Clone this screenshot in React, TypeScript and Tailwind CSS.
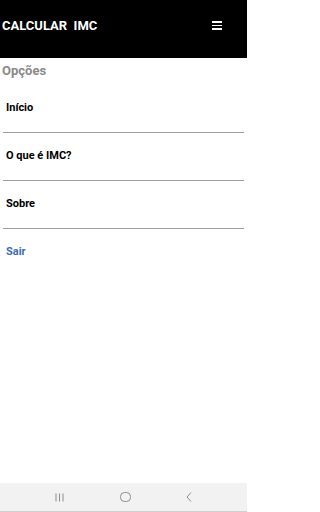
const FONT = { fontFamily: "Roboto, 'Liberation Sans', sans-serif" };

const items = ["Início", "O que é IMC?", "Sobre"];

export default function App() {
    return (
        <div className="w-[247px] h-[512px] bg-white flex flex-col" style={FONT}>
            <header className="h-[58px] bg-black flex items-start justify-between pt-[17px]">
                <h1 className="text-white font-bold text-[13px] leading-[18px] pl-[2px] whitespace-pre">
                    CALCULAR  IMC
                </h1>
                <div className="flex flex-col gap-[2px] mr-[25px] mt-[4px]">
                    <span className="block w-[10px] h-[1.5px] bg-white" />
                    <span className="block w-[10px] h-[1.5px] bg-white" />
                    <span className="block w-[10px] h-[1.5px] bg-white" />
                </div>
            </header>

            <main className="flex-1 flex flex-col">
                <p className="text-[#8a8a8a] font-bold text-[13px] leading-[16px] pl-[2px] pt-[5px] h-[27px]">
                    Opções
                </p>
                <ul className="px-[3px]">
                    {items.map((item) => (
                        <li
                            key={item}
                            className="h-[48px] flex items-center border-b border-[#9e9e9e] pl-[3px] text-[11px] font-bold text-black"
                        >
                            {item}
                        </li>
                    ))}
                    <li className="h-[46px] flex items-center pl-[3px] text-[11px] font-bold text-[#3b6db5]">
                        Sair
                    </li>
                </ul>
            </main>

            <nav className="h-[29px] bg-[#f2f2f2] border-b border-[#d0d0d0] flex items-center justify-between px-[55px] text-[#8c8c8c]">
                <svg width="9" height="9" viewBox="0 0 9 9" fill="none" stroke="currentColor" strokeWidth="1">
                    <path d="M1 0.5v8M4.5 0.5v8M8 0.5v8" />
                </svg>
                <svg width="11" height="10" viewBox="0 0 11 10" fill="none" stroke="currentColor" strokeWidth="1">
                    <rect x="0.5" y="0.5" width="10" height="9" rx="4" />
                </svg>
                <svg width="6" height="10" viewBox="0 0 6 10" fill="none" stroke="currentColor" strokeWidth="1">
                    <path d="M5 0.5L1 5l4 4.5" />
                </svg>
            </nav>
        </div>
    );
}
